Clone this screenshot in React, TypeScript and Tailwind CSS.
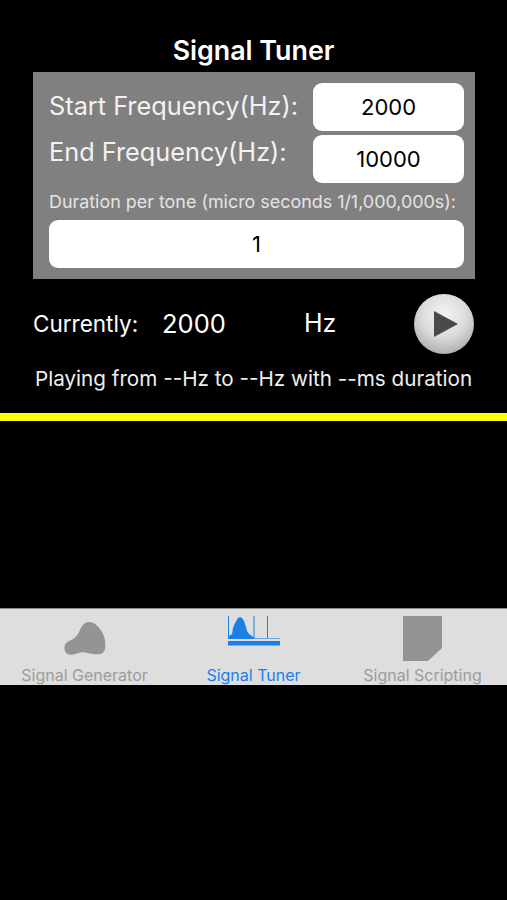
import { Fragment } from "react";

const FONT = "font-['Inter','Liberation_Sans',sans-serif]";

function ValueBox({ value }: { value: string }) {
  return (
    <div className="flex h-12 items-center justify-center rounded-[9px] bg-white text-[22px] text-black">
      {value}
    </div>
  );
}

function GeneratorIcon() {
  return (
    <svg width="42" height="34" viewBox="0 0 42 34" className="text-[#949494]">
      <path
        d="M25 0 C31 0 35 5 38 10 C41 15 42 22 41 27 C40 32 35 33 29 32 C23 31 19 29 14 31 C9 33 3 34 1 29 C-1 24 2 20 7 18 C12 16 14 12 16 8 C18 3 21 0 25 0 Z"
        fill="currentColor"
      />
    </svg>
  );
}

function TunerIcon() {
  return (
    <svg width="52" height="30" viewBox="0 0 52 30" className="text-[#1c7fe8]">
      <path
        d="M1 23 L1 20 L4 18 L5 12 L7 7 L10 2 L12 1 L14 2 L16 5 L18 11 L19 15 L21 18 L24 20 L26 22 L26 23 Z"
        fill="currentColor"
      />
      <g stroke="currentColor" strokeWidth="1" fill="none">
        <path d="M0.5 0 V23" />
        <path d="M26 0 V22" />
        <path d="M39.5 0 V22" />
      </g>
      <path d="M26 22.5 H52" stroke="currentColor" strokeWidth="1" opacity="0.6" />
      <rect x="0" y="25" width="52" height="4.5" fill="currentColor" />
    </svg>
  );
}

function ScriptingIcon() {
  return (
    <svg width="39" height="46" viewBox="0 0 39 46" className="text-[#949494]">
      <path d="M0 0 H39 V32 L25 45 H0 Z" fill="currentColor" />
    </svg>
  );
}

const TABS = [
  { label: "Signal Generator", Icon: GeneratorIcon, iconClass: "pt-[13px]", active: false },
  { label: "Signal Tuner", Icon: TunerIcon, iconClass: "pt-[7px]", active: true },
  { label: "Signal Scripting", Icon: ScriptingIcon, iconClass: "pt-[7px]", active: false },
];

export default function App() {
  return (
    <div className={`flex h-[900px] w-full flex-col overflow-hidden bg-black text-white ${FONT}`}>
      <h1 className="mt-[35px] h-[37px] text-center text-[26.8px] leading-[30px] font-semibold">
        Signal Tuner
      </h1>

      {/* settings panel */}
      <div className="mx-[33px] h-[207px] w-[442px] bg-[#808080] pt-[11px] pr-[11px] pl-4">
        <div className="flex justify-between">
          <div className="flex flex-col pt-2 text-[25.3px] leading-[29px] whitespace-nowrap text-[#f2f2f2]">
            <span className="h-[46px]">Start Frequency(Hz):</span>
            <span>End Frequency(Hz):</span>
          </div>
          <div className="flex w-[151px] flex-col gap-1">
            <ValueBox value="2000" />
            <ValueBox value="10000" />
          </div>
        </div>
        <p className="mt-[9px] h-7 text-[17.9px] leading-5 whitespace-nowrap text-[#e4e4e4]">
          Duration per tone (micro seconds 1/1,000,000s):
        </p>
        <ValueBox value="1" />
      </div>

      {/* current state */}
      <div className="mt-[14px] flex h-[62px] items-center pr-[33px] pl-[33px]">
        <span className="w-[129px] text-[22.5px]">Currently:</span>
        <span className="w-[142px] text-[25.5px]">2000</span>
        <span className="text-[25px]">Hz</span>
        <div className="ml-auto flex h-[60px] w-[60px] items-center justify-center rounded-full bg-[radial-gradient(circle_at_50%_35%,#f4f4f4_0%,#dcdcdc_45%,#a8a8a8_85%,#7c7c7c_100%)]">
          <svg width="26" height="28" viewBox="0 0 26 28" className="ml-[4px]">
            <path d="M1 1 L25 14 L1 27 Z" fill="#4a4a4a" />
          </svg>
        </div>
      </div>

      <p className="mt-3 pl-[35px] text-[20.66px] leading-6 whitespace-nowrap text-[#efefef]">
        Playing from --Hz to --Hz with --ms duration
      </p>

      <div className="mt-[22px] h-2 bg-[#ffff00]" />

      <div className="mt-[187px] flex h-[77px] border-t border-[#8a8a8a] bg-[#dedede]">
        {TABS.map(({ label, Icon, iconClass, active }) => (
          <Fragment key={label}>
            <div className="relative flex h-full flex-1 flex-col items-center">
              <div className={iconClass}>
                <Icon />
              </div>
              <span
                className={`absolute top-[56px] text-[16px] leading-5 whitespace-nowrap ${
                  active ? "text-[#1c7fe8]" : "text-[#9c9c9c]"
                }`}
              >
                {label}
              </span>
            </div>
          </Fragment>
        ))}
      </div>
    </div>
  );
}
